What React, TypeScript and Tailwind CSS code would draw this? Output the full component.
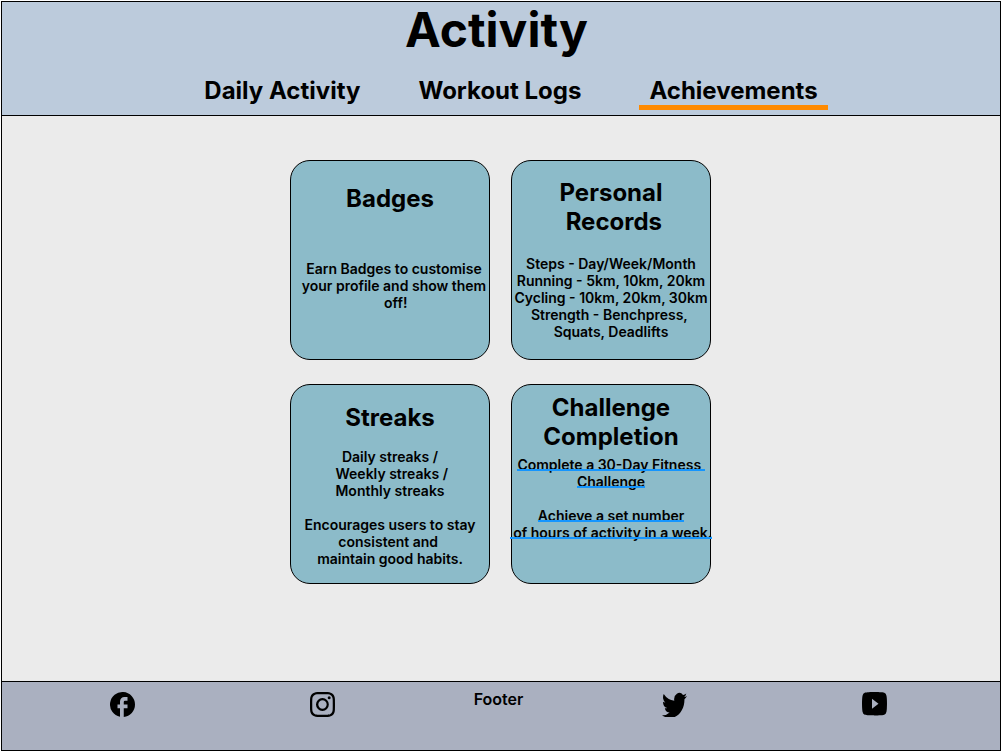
import type { ReactNode } from "react";
import { BsInstagram, BsTwitter, BsYoutube } from "react-icons/bs";

const tabs = [
  { label: "Daily Activity", active: false },
  { label: "Workout Logs", active: false },
  { label: "Achievements", active: true },
];

function FacebookIcon() {
  return (
    <svg viewBox="0 0 24 24" fill="currentColor" className="size-[25px]" aria-hidden="true">
      <path d="M24 12a12 12 0 1 0-14.4 11.76V15.6H7.2V12h2.4V9a4.2 4.2 0 0 1 4.2-4.2h3v3.6h-2.4a1.2 1.2 0 0 0-1.2 1.2V12h3.6v3.6h-3.6v8.34A12 12 0 0 0 24 12Z" />
    </svg>
  );
}

function Card({ className, children }: { className: string; children: ReactNode }) {
  return (
    <section
      className={`flex h-[200px] w-[200px] flex-col items-center rounded-[20px] border border-black bg-[#8cbbc9] ${className}`}
    >
      {children}
    </section>
  );
}

function Title({ lines }: { lines: string[] }) {
  return (
    <h2 className="flex flex-col items-center text-[24px] leading-[29px] font-bold whitespace-pre">
      {lines.map((line) => (
        <span key={line}>{line}</span>
      ))}
    </h2>
  );
}

function Lines({ lines }: { lines: string[] }) {
  return (
    <p className="flex flex-col items-center text-[14px] leading-[17px] font-semibold whitespace-pre">
      {lines.map((line) => (
        <span key={line}>{line}</span>
      ))}
    </p>
  );
}

function ChallengeLink({ lines }: { lines: string[] }) {
  return (
    <a
      href="#challenge"
      className="flex flex-col items-center text-[14px] leading-[17px] font-semibold whitespace-pre"
    >
      {lines.map((line) => (
        <span
          key={line}
          className="relative after:absolute after:inset-x-0 after:bottom-[2px] after:h-[2px] after:bg-[#1495ff]"
        >
          {line}
        </span>
      ))}
    </a>
  );
}

export default function App() {
  return (
    <div className="flex min-h-screen flex-col bg-white pt-px pl-px font-['Inter',sans-serif] text-black">
      <header className="flex flex-col items-center border border-black bg-[#bccbdc] pb-[5px]">
        <h1 className="pr-[9px] text-[48px] leading-[56px] font-bold">Activity</h1>
        <nav className="mt-[18px] flex gap-[58px] pl-[30px]">
          {tabs.map((tab) => (
            <a
              key={tab.label}
              href="#tab"
              aria-current={tab.active ? "page" : undefined}
              className={`border-b-[5px] text-[24px] leading-[29px] font-bold ${
                tab.active ? "border-[#ff8a00] px-[10px]" : "border-transparent"
              }`}
            >
              {tab.label}
            </a>
          ))}
        </nav>
      </header>

      <main className="flex flex-1 justify-center border-x border-black bg-[#ebebeb] pt-[44px] pr-px">
        <div className="grid grid-cols-[200px_200px] content-start gap-x-[21px] gap-y-[24px]">
          <Card className="gap-[47px] pt-[23px]">
            <Title lines={["Badges"]} />
            <div className="pl-[8px]">
              <Lines lines={["Earn Badges to customise", "your profile and show them", " off!"]} />
            </div>
          </Card>
          <Card className="gap-[19px] pt-[17px]">
            <Title lines={["Personal", " Records"]} />
            <Lines
              lines={[
                "Steps - Day/Week/Month",
                "Running - 5km, 10km, 20km",
                "Cycling - 10km, 20km, 30km",
                "Strength - Benchpress, ",
                "Squats, Deadlifts",
              ]}
            />
          </Card>
          <Card className="gap-[16px] pt-[18px]">
            <Title lines={["Streaks"]} />
            <div className="flex flex-col gap-[17px]">
              <Lines lines={["Daily streaks /", " Weekly streaks /", "Monthly streaks"]} />
              <Lines lines={["Encourages users to stay", "consistent and ", "maintain good habits."]} />
            </div>
          </Card>
          <Card className="gap-[5px] pt-[8px]">
            <Title lines={["Challenge", "Completion"]} />
            <div className="flex flex-col items-center gap-[17px]">
              <ChallengeLink lines={["Complete a 30-Day Fitness ", "Challenge"]} />
              <ChallengeLink lines={["Achieve a set number", " of hours of activity in a week."]} />
            </div>
          </Card>
        </div>
      </main>

      <footer className="flex h-[70px] items-start border border-black bg-[#aab0c0] pt-[10px] pr-[113px] pl-[108px]">
        <div className="flex flex-1 justify-between">
          <a href="#facebook" aria-label="Facebook">
            <FacebookIcon />
          </a>
          <a href="#instagram" aria-label="Instagram">
            <BsInstagram className="size-[25px]" />
          </a>
        </div>
        <p className="mx-[139px] -mt-[2px] text-[16px] leading-[19px] font-semibold">Footer</p>
        <div className="flex flex-1 justify-between">
          <a href="#twitter" aria-label="Twitter">
            <BsTwitter className="size-[25px]" viewBox="0 1.5 16 13" preserveAspectRatio="none" />
          </a>
          <a href="#youtube" aria-label="YouTube">
            <BsYoutube className="size-[25px]" viewBox="0 2 16 12" preserveAspectRatio="none" />
          </a>
        </div>
      </footer>
    </div>
  );
}
